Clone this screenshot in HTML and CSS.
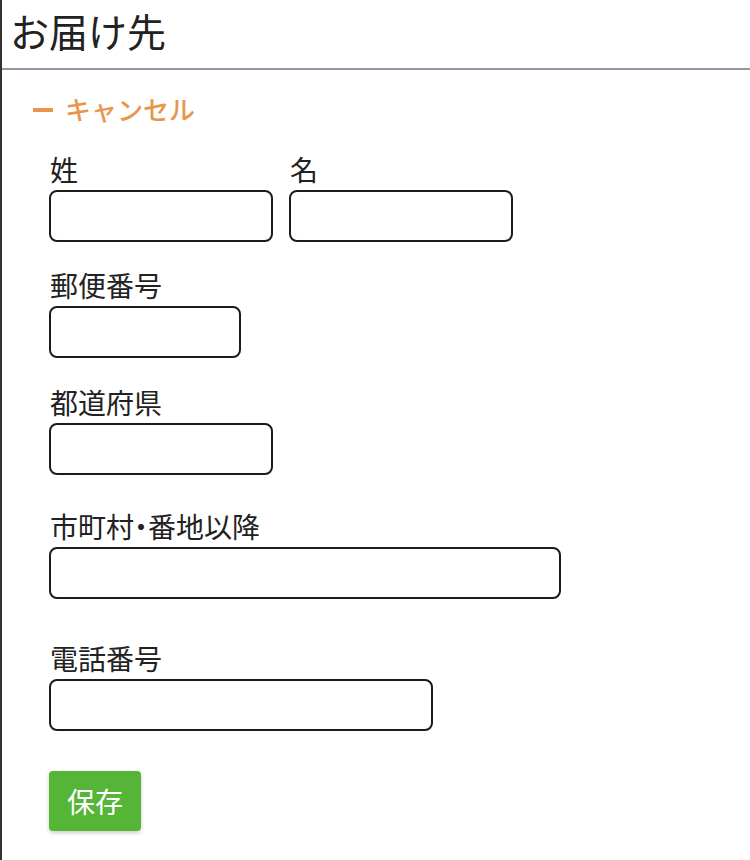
FILE: index.html
```html
<!DOCTYPE html>
<html lang="ja">
<head>
<meta charset="utf-8">
<title>お届け先</title>
<link rel="stylesheet" href="styles.css">
</head>
<body>
<div class="page">
  <header class="head">
    <h1 class="title">お届け先</h1>
  </header>
  <a class="cancel" href="#"><span class="minus"></span>キャンセル</a>
  <form class="form">
    <div class="row names">
      <div class="field">
        <label class="label">姓</label>
        <input class="input w224" type="text">
      </div>
      <div class="field">
        <label class="label">名</label>
        <input class="input w224" type="text">
      </div>
    </div>
    <div class="row g2">
      <label class="label">郵便番号</label>
      <input class="input w192" type="text">
    </div>
    <div class="row g3">
      <label class="label">都道府県</label>
      <input class="input w224" type="text">
    </div>
    <div class="row g4">
      <label class="label">市町村<span class="dot">・</span>番地以降</label>
      <input class="input w512" type="text">
    </div>
    <div class="row g5">
      <label class="label">電話番号</label>
      <input class="input w384" type="text">
    </div>
    <button class="save" type="button">保存</button>
  </form>
</div>
</body>
</html>
```
FILE: styles.css
```css
html, body {
  margin: 0;
  padding: 0;
  background: #fff;
}
body {
  font-family: "Noto Sans CJK JP", "Noto Sans", sans-serif;
  color: #222;
}
.page {
  border-left: 2px solid #333;
  min-height: 860px;
  box-sizing: border-box;
}
.head {
  height: 68px;
  border-bottom: 2px solid #8e9aa6;
  padding-left: 8px;
  display: flex;
  align-items: flex-start;
}
.title {
  margin: 0;
  font-size: 39px;
  font-weight: 400;
  line-height: 60px;
}
.cancel {
  display: flex;
  align-items: center;
  margin: 22px 0 0 31px;
  height: 34px;
  font-size: 26px;
  font-weight: 500;
  line-height: 34px;
  color: #e8964c;
  text-decoration: none;
  width: max-content;
}
.minus {
  display: inline-block;
  width: 20px;
  height: 4px;
  background: #e8964c;
  margin-right: 12px;
  margin-top: 2px;
}
.form {
  padding: 0 0 0 47px;
  margin-top: 26px;
}
.row {
  display: flex;
  flex-direction: column;
  align-items: flex-start;
}
.names {
  flex-direction: row;
  gap: 16px;
}
.field {
  display: flex;
  flex-direction: column;
}
.label {
  display: block;
  font-size: 28px;
  line-height: 34px;
  margin-bottom: 4px;
  padding-left: 1px;
}
.dot {
  font-feature-settings: "halt" 1;
}
.input {
  box-sizing: border-box;
  height: 52px;
  border: 2px solid #1c1c1c;
  border-radius: 8px;
  background: #fff;
  margin: 0;
  padding: 0 10px;
  font-size: 24px;
  font-family: inherit;
}
.w192 { width: 192px; }
.w224 { width: 224px; }
.w384 { width: 384px; }
.w512 { width: 512px; }
.g2 { margin-top: 26px; }
.g3 { margin-top: 27px; }
.g4 { margin-top: 34px; }
.g5 { margin-top: 42px; }
.save {
  display: block;
  margin-top: 40px;
  width: 92px;
  height: 60px;
  border: none;
  border-radius: 4px;
  background: #55b537;
  color: #fff;
  font-family: inherit;
  font-size: 28px;
  line-height: 60px;
  padding: 0;
  box-shadow: 0 2px 4px rgba(0, 0, 0, 0.2);
}
```
